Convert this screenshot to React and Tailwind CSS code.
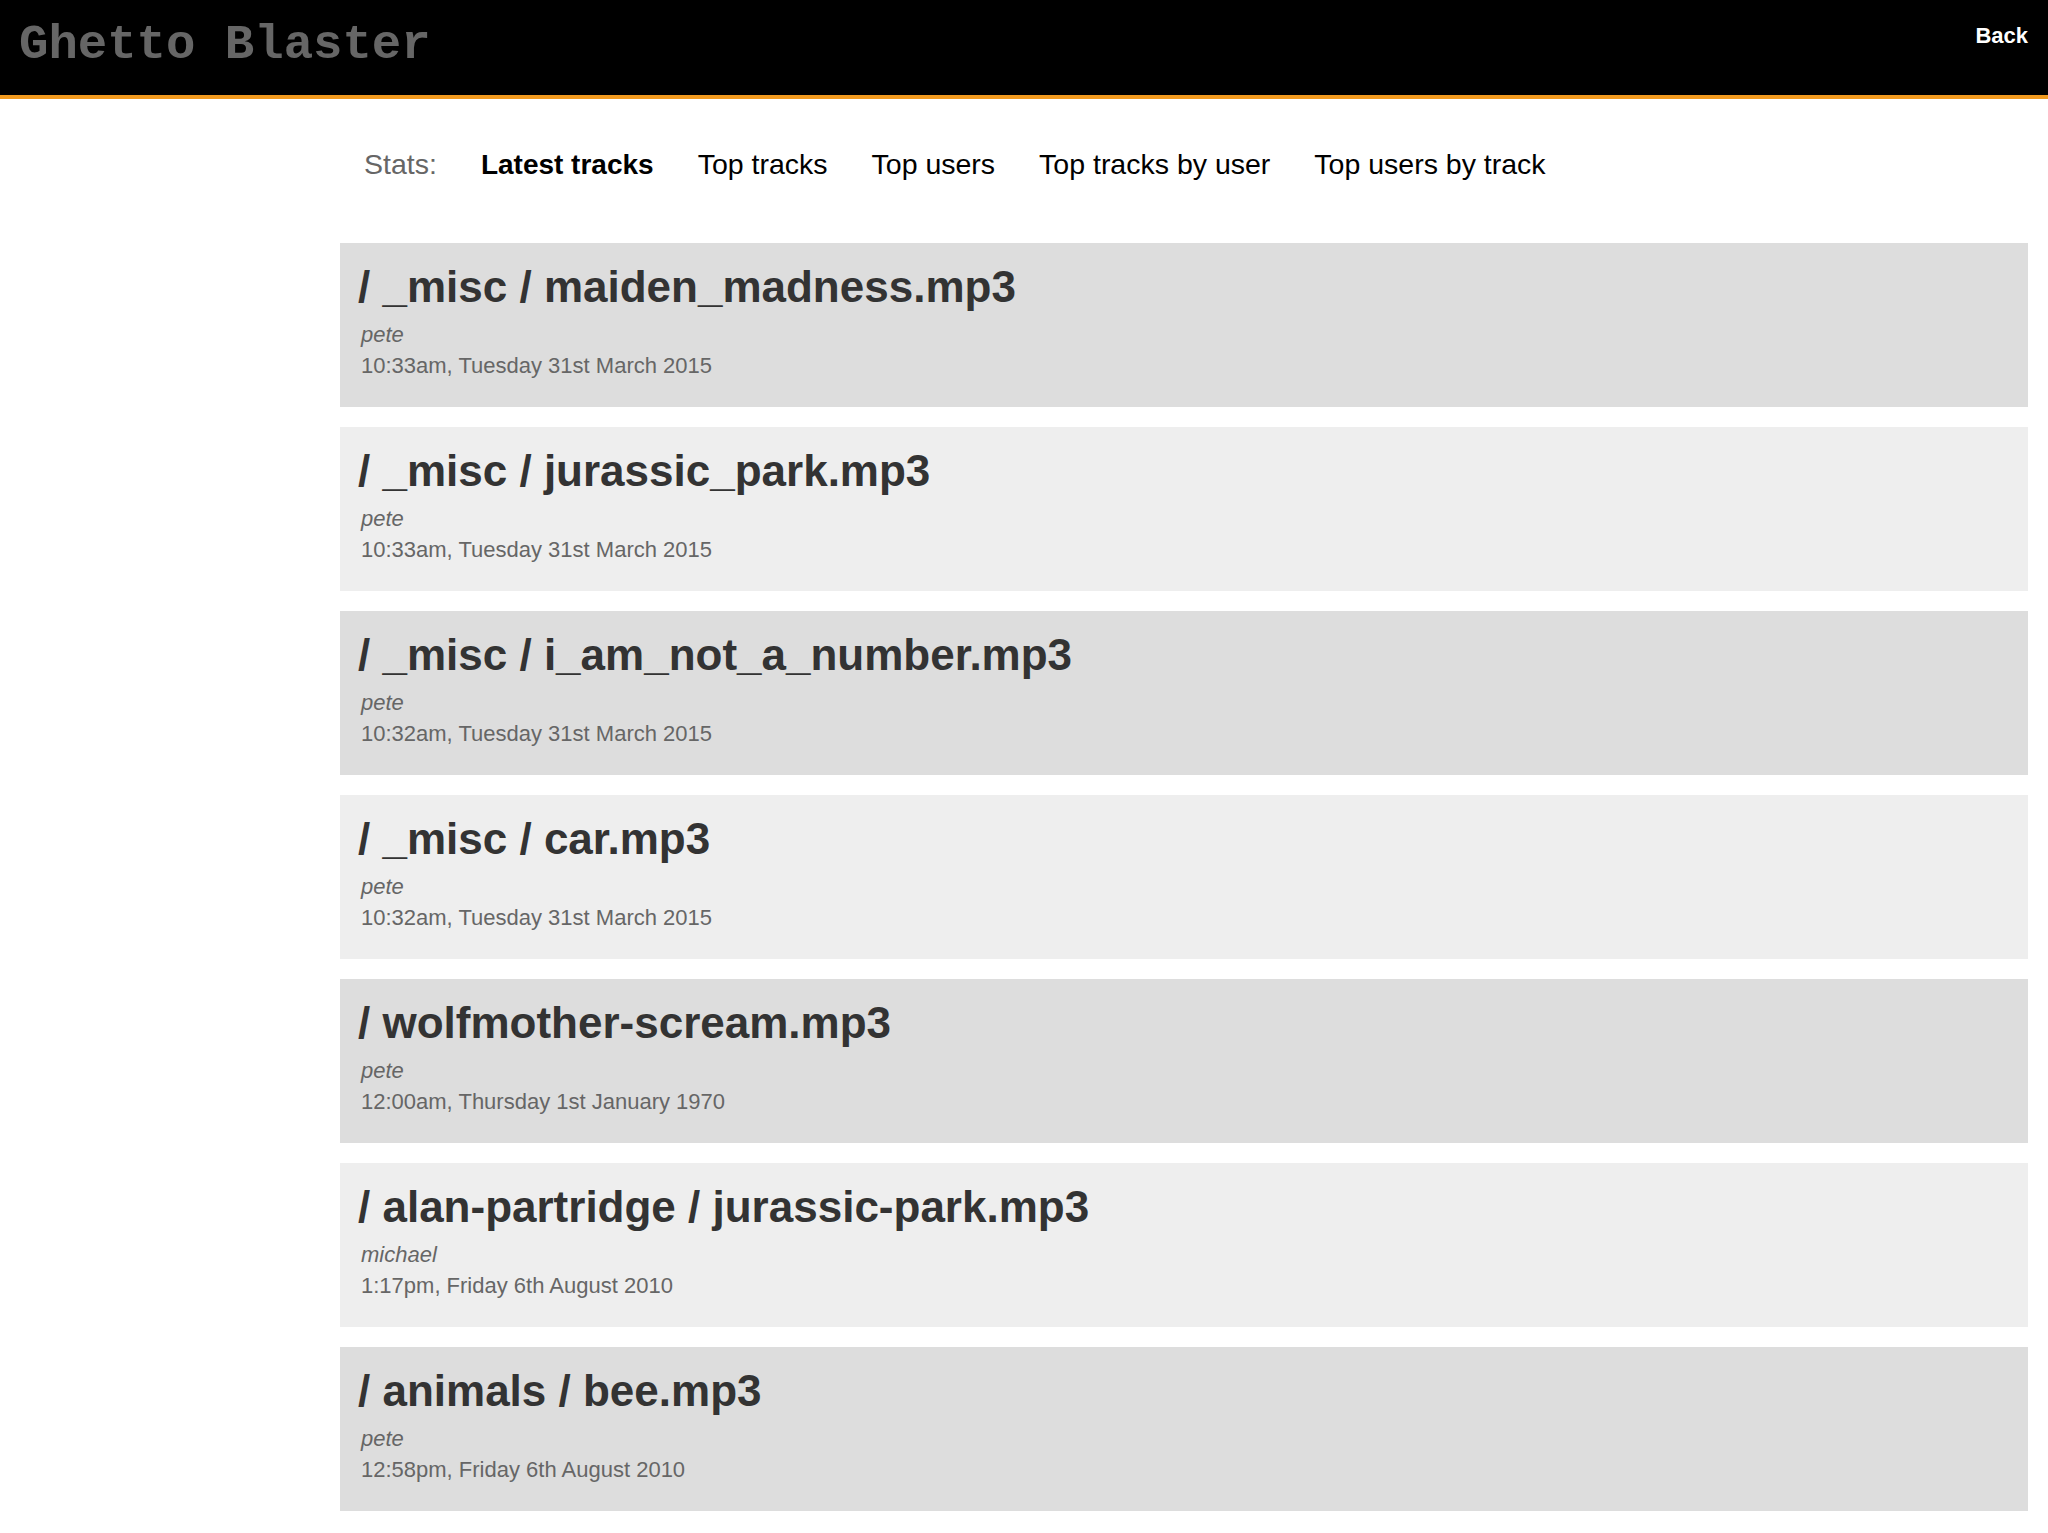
import React from "react";

const tracks = [
  { path: "/ _misc / maiden_madness.mp3", user: "pete", date: "10:33am, Tuesday 31st March 2015" },
  { path: "/ _misc / jurassic_park.mp3", user: "pete", date: "10:33am, Tuesday 31st March 2015" },
  { path: "/ _misc / i_am_not_a_number.mp3", user: "pete", date: "10:32am, Tuesday 31st March 2015" },
  { path: "/ _misc / car.mp3", user: "pete", date: "10:32am, Tuesday 31st March 2015" },
  { path: "/ wolfmother-scream.mp3", user: "pete", date: "12:00am, Thursday 1st January 1970" },
  { path: "/ alan-partridge / jurassic-park.mp3", user: "michael", date: "1:17pm, Friday 6th August 2010" },
  { path: "/ animals / bee.mp3", user: "pete", date: "12:58pm, Friday 6th August 2010" },
];

const navItems = ["Latest tracks", "Top tracks", "Top users", "Top tracks by user", "Top users by track"];

const App = () => {
  return (
    <div className="min-h-screen bg-white font-['Liberation_Sans',Arial,sans-serif]">
      {/* Header */}
      <header className="h-[99px] bg-black border-b-4 border-[#f29a1f] flex justify-between items-start">
        <h1 className="pl-[19px] pt-[21px] text-[49px] leading-[48px] font-bold text-[#666666] font-['Liberation_Mono','Courier_New',monospace]">
          Ghetto Blaster
        </h1>
        <a href="#" className="pr-[20px] pt-[25px] text-[22px] leading-[22px] font-bold text-white">
          Back
        </a>
      </header>

      <main className="pl-[340px] pr-[20px]">
        {/* Stats nav */}
        <nav className="pt-[51px] pl-[24px] flex items-baseline gap-[44px] text-[28.5px] leading-[28px]">
          <span className="text-[#666666]">Stats:</span>
          {navItems.map((item, i) => (
            <a key={item} href="#" className={i === 0 ? "text-[28px] font-bold text-black" : "text-black"}>
              {item}
            </a>
          ))}
        </nav>

        {/* Track list */}
        <ul className="mt-[64px] flex flex-col gap-[20px]">
          {tracks.map((t, i) => (
            <li
              key={i}
              className={`h-[164px] pl-[18px] pt-[22px] ${i % 2 === 0 ? "bg-[#dddddd]" : "bg-[#eeeeee]"}`}
            >
              <h2 className="text-[44px] leading-[44px] font-bold text-[#333333]">{t.path}</h2>
              <div className="pl-[3px] pt-[10px] text-[22px] text-[#666666]">
                <p className="leading-[32px] italic">{t.user}</p>
                <p className="leading-[30px]">{t.date}</p>
              </div>
            </li>
          ))}
        </ul>
      </main>
    </div>
  );
};

export default App;
